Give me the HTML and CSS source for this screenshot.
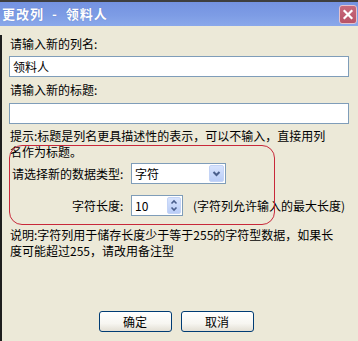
FILE: index.html
```html
<!DOCTYPE html>
<html lang="zh-CN">
<head>
<meta charset="utf-8">
<title>更改列</title>
<link rel="stylesheet" href="styles.css">
</head>
<body>
<div class="window">
  <div class="titlebar">
    <span class="title">更改列 - 领料人</span>
    <span class="close"><svg width="16" height="17" viewBox="0 0 16 17"><path d="M4.5 5 L11.5 12 M11.5 5 L4.5 12" stroke="#fff" stroke-width="2.2" stroke-linecap="square"/></svg></span>
  </div>
  <div class="content">
    <div class="label first">请输入新的列名:</div>
    <div class="field">领料人</div>
    <div class="label">请输入新的标题:</div>
    <div class="field second"></div>
    <p class="note hint">提示:标题是列名更具描述性的表示，可以不输入，直接用列<br>名作为标题。</p>
    <div class="row row-type">
      <div class="rowlabel">请选择新的数据类型<span class="colon">:</span></div>
      <div class="select">
        <span class="value">字符</span>
        <span class="dropbtn"><svg width="13" height="15" viewBox="0 0 13 15"><path d="M3.5 6 L6.5 9 L9.5 6" fill="none" stroke="#4a5f8c" stroke-width="2"/></svg></span>
      </div>
    </div>
    <div class="row row-len">
      <div class="rowlabel">字符长度<span class="colon">:</span></div>
      <div class="spin">
        <span class="value">10</span>
        <span class="spinbtn"><svg width="12" height="15" viewBox="0 0 12 15"><path d="M3.5 5.5 L6 3 L8.5 5.5" fill="none" stroke="#4a5f8c" stroke-width="1.6"/><path d="M3.5 9.5 L6 12 L8.5 9.5" fill="none" stroke="#4a5f8c" stroke-width="1.6"/></svg></span>
      </div>
      <div class="paren">(字符列允许输入的最大长度)</div>
    </div>
    <p class="note desc">说明:字符列用于储存长度少于等于255的字符型数据，如果长<br>度可能超过255，请改用备注型</p>
    <div class="buttons">
      <button class="btn">确定</button>
      <button class="btn">取消</button>
    </div>
  </div>
  <div class="highlight"></div>
</div>
</body>
</html>
```
FILE: styles.css
```css
* { box-sizing: border-box; }
html, body { margin: 0; padding: 0; }
body {
  width: 358px;
  height: 341px;
  overflow: hidden;
  background: #ece9d8;
  font-family: "Noto Sans CJK SC", "Noto Sans", sans-serif;
  font-size: 12px;
  color: #000;
}
.window {
  position: relative;
  width: 358px;
  height: 341px;
  background: #ece9d8;
}
.titlebar {
  height: 26px;
  border-top: 2px solid #3e3e3e;
  background: linear-gradient(#7492e0, #7d9ce5 55%, #8aa8ea);
  display: flex;
  align-items: center;
  justify-content: space-between;
  padding: 0 1px 0 2px;
}
.title {
  color: #fff;
  font-weight: bold;
  font-size: 13px;
  line-height: 16px;
  letter-spacing: 1px;
  word-spacing: 4px;
  margin-top: -1px;
  text-shadow: 0 0 1px rgba(40, 60, 140, 0.4);
}
.close {
  width: 18px;
  height: 19px;
  margin-top: 1px;
  background: linear-gradient(#c86a7c, #b85266);
  border: 1px solid #e6c2cc;
  border-radius: 3px;
  display: flex;
  align-items: center;
  justify-content: center;
}
.content {
  height: 315px;
  border-left: 2px solid #1e1e1e;
  padding: 0 9px 0 7px;
}
.label {
  line-height: 17px;
  padding-left: 1px;
  margin-top: 4px;
}
.label.first { margin-top: 9px; }
.field {
  height: 21px;
  margin-top: 4px;
  background: #fff;
  border: 1px solid #7f9db9;
  padding-left: 3px;
  line-height: 19px;
}
.field.second { margin-top: 5px; }
.note {
  margin: 0;
  line-height: 16px;
  padding-left: 1px;
  white-space: nowrap;
}
.hint { margin-top: 4px; }
.row {
  display: flex;
  align-items: center;
}
.row-type { margin-top: 3px; }
.row-len { margin-top: 11px; }
.rowlabel {
  width: 117px;
  text-align: right;
  margin-right: 5px;
  line-height: 17px;
}
.colon {
  display: inline-block;
  width: 6px;
  text-align: left;
}
.select {
  width: 95px;
  height: 21px;
  background: #fff;
  border: 1px solid #7f9db9;
  display: flex;
  align-items: center;
  justify-content: space-between;
  padding: 0 1px 0 3px;
}
.value { line-height: 19px; }
.dropbtn, .spinbtn {
  height: 17px;
  border: 1px solid #c4d4f6;
  border-radius: 2px;
  background: linear-gradient(#d7e3fd, #b9cdf7);
  display: flex;
  align-items: center;
  justify-content: center;
}
.dropbtn { width: 15px; }
.spin {
  width: 52px;
  height: 21px;
  background: #fff;
  border: 1px solid #7f9db9;
  display: flex;
  align-items: center;
  justify-content: space-between;
  padding: 0 1px 0 3px;
}
.spinbtn { width: 14px; }
.paren {
  margin-left: 10px;
  line-height: 17px;
}
.desc { margin-top: 11px; }
.buttons {
  display: flex;
  justify-content: center;
  gap: 9px;
  margin-top: 52px;
  padding-right: 6px;
}
.btn {
  width: 73px;
  height: 21px;
  border: 1px solid #003c74;
  border-radius: 3px;
  background: linear-gradient(#ffffff, #f7f6f1 60%, #e3dfd4);
  font-family: "Noto Sans CJK SC", "Noto Sans", sans-serif;
  font-size: 12px;
  color: #000;
  padding: 0;
  line-height: 19px;
}
.highlight {
  position: absolute;
  left: 9px;
  top: 145px;
  width: 266px;
  height: 80px;
  border: 1.5px solid #c8283a;
  border-radius: 13px;
  pointer-events: none;
}
```
